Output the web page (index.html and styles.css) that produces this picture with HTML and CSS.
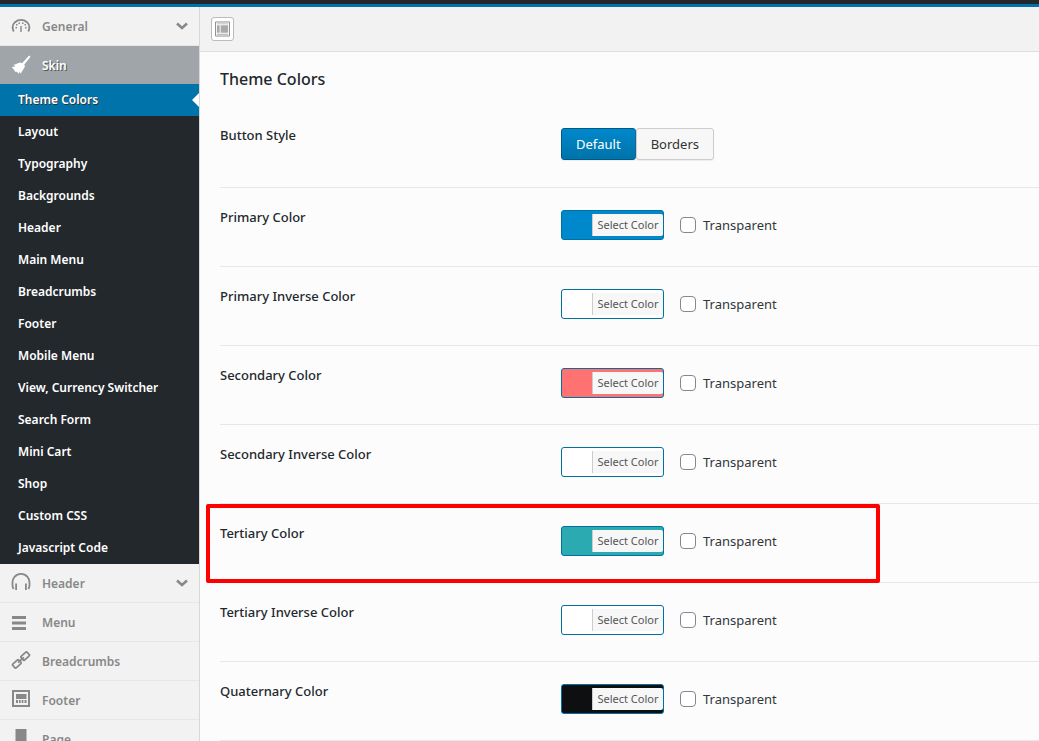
FILE: index.html
```html
<!DOCTYPE html>
<html lang="en">
<head>
    <meta charset="UTF-8">
    <meta name="viewport" content="width=device-width, initial-scale=1.0">
    <title>Theme Options - Theme Colors</title>
    <link rel="stylesheet" href="styles.css">
</head>
<body>
    <div class="topbar"></div>
    <div class="panel">
        <nav class="sidebar">
            <!-- General -->
            <a href="#" class="group">
                <svg class="icon" viewBox="0 0 20 20"><path d="M2.700 15.500C1 12 1.500 8.500 4 6.200 7.500 3.200 12.500 3.200 16 6.200 18.500 8.500 19 12 17.300 15.500" fill="none" stroke="currentColor" stroke-width="1.800"/><path d="M9.300 10h1.400v6H9.300zM5 8h1.500v1.500H5zM7.500 6.500H9V8H7.500zM11 6.500h1.500V8H11zM13.500 8H15v1.500h-1.500zM4.500 11H6v1.500H4.500zM14 11h1.500v1.500H14z" fill="currentColor"/></svg>
                <span>General</span>
                <svg class="chevron" viewBox="0 0 12 8"><path d="M1 1.500l5 4.500 5-4.500" fill="none" stroke="currentColor" stroke-width="2.500"/></svg>
            </a>

            <!-- Skin -->
            <a href="#" class="group open">
                <svg class="icon" viewBox="0 0 20 20"><path d="M18.200.5l1.300 1.300-6.300 8 .8 1.700L9.800 18.500 8 16.500l.2 2.500L5.500 16.500 5 17.500.8 12l3.700-.5L2.500 10 9 7.500l2 .7z" fill="currentColor"/></svg>
                <span>Skin</span>
            </a>
            <ul class="submenu">
                <li><a href="#" class="active">Theme Colors</a></li>
                <li><a href="#">Layout</a></li>
                <li><a href="#">Typography</a></li>
                <li><a href="#">Backgrounds</a></li>
                <li><a href="#">Header</a></li>
                <li><a href="#">Main Menu</a></li>
                <li><a href="#">Breadcrumbs</a></li>
                <li><a href="#">Footer</a></li>
                <li><a href="#">Mobile Menu</a></li>
                <li><a href="#">View, Currency Switcher</a></li>
                <li><a href="#">Search Form</a></li>
                <li><a href="#">Mini Cart</a></li>
                <li><a href="#">Shop</a></li>
                <li><a href="#">Custom CSS</a></li>
                <li><a href="#">Javascript Code</a></li>
            </ul>

            <a href="#" class="group">
                <svg class="icon" viewBox="0 0 20 20"><path d="M2.500 16C.5 12 1.500 6 3.500 3.800 7 0 13 0 16.500 3.800 18.500 6 19.500 12 17.500 16" fill="none" stroke="currentColor" stroke-width="1.800"/><path d="M4.200 10.500h1.800v6.500H4.200zM14 10.500h1.800v6.500H14z" fill="currentColor"/></svg>
                <span>Header</span>
                <svg class="chevron" viewBox="0 0 12 8"><path d="M1 1.500l5 4.500 5-4.500" fill="none" stroke="currentColor" stroke-width="2.500"/></svg>
            </a>
            <a href="#" class="group">
                <svg class="icon" viewBox="0 0 20 20"><path d="M1 4h14v3H1zM1 9.500h14v3H1zM1 15h14v3H1z" fill="currentColor"/></svg>
                <span>Menu</span>
            </a>
            <a href="#" class="group">
                <svg class="icon" viewBox="0 0 20 20"><g transform="rotate(-43 10 9)" fill="none" stroke="currentColor" stroke-width="1.700"><rect x=".3" y="6.500" width="8" height="5" rx=".8"/><rect x="11.700" y="6.500" width="8" height="5" rx=".8"/><path d="M6 9h8"/></g></svg>
                <span>Breadcrumbs</span>
            </a>
            <a href="#" class="group">
                <svg class="icon" viewBox="0 0 20 20"><path d="M2 1h16v15H2z" fill="none" stroke="currentColor" stroke-width="2"/><path d="M5 4h10.500v5H5zM5 10h2v3H5zM8 10h1.700v3H8zM10.700 10h1.700v3h-1.700zM13.500 10h2v3h-2z" fill="currentColor"/></svg>
                <span>Footer</span>
            </a>
            <a href="#" class="group">
                <svg class="icon" viewBox="0 0 20 20"><path d="M4.500 0h11v17h-11z" fill="currentColor"/></svg>
                <span>Page</span>
            </a>
        </nav>

        <main class="main">
            <div class="toolbar">
                <button type="button" class="expand" aria-label="Expand options">
                    <svg viewBox="0 0 16 16"><path d="M.5.5h15v15H.5z" fill="#fff" stroke="#888"/><path d="M2 2h12v1H2zM2 4h3v8H2zM6 4h8v8H6zM2 13h12v1H2z" fill="#aaa"/></svg>
                </button>
            </div>

            <form class="section">
                <h2>Theme Colors</h2>

                <div class="field">
                    <span class="field-title">Button Style</span>
                    <div class="button-set">
                        <button type="button" class="selected">Default</button>
                        <button type="button">Borders</button>
                    </div>
                </div>

                <div class="field">
                    <span class="field-title">Primary Color</span>
                    <div class="controls">
                        <button type="button" class="color-btn blue"><span>Select Color</span></button>
                        <label><input type="checkbox"> Transparent</label>
                    </div>
                </div>

                <div class="field">
                    <span class="field-title">Primary Inverse Color</span>
                    <div class="controls">
                        <button type="button" class="color-btn"><span>Select Color</span></button>
                        <label><input type="checkbox"> Transparent</label>
                    </div>
                </div>

                <div class="field">
                    <span class="field-title">Secondary Color</span>
                    <div class="controls">
                        <button type="button" class="color-btn coral"><span>Select Color</span></button>
                        <label><input type="checkbox"> Transparent</label>
                    </div>
                </div>

                <div class="field">
                    <span class="field-title">Secondary Inverse Color</span>
                    <div class="controls">
                        <button type="button" class="color-btn"><span>Select Color</span></button>
                        <label><input type="checkbox"> Transparent</label>
                    </div>
                </div>

                <div class="field highlight">
                    <span class="field-title">Tertiary Color</span>
                    <div class="controls">
                        <button type="button" class="color-btn teal"><span>Select Color</span></button>
                        <label><input type="checkbox"> Transparent</label>
                    </div>
                </div>

                <div class="field">
                    <span class="field-title">Tertiary Inverse Color</span>
                    <div class="controls">
                        <button type="button" class="color-btn"><span>Select Color</span></button>
                        <label><input type="checkbox"> Transparent</label>
                    </div>
                </div>

                <div class="field">
                    <span class="field-title">Quaternary Color</span>
                    <div class="controls">
                        <button type="button" class="color-btn black"><span>Select Color</span></button>
                        <label><input type="checkbox"> Transparent</label>
                    </div>
                </div>
            </form>
        </main>
    </div>
</body>
</html>
```
FILE: styles.css
```css
*,
*::after {
    margin: 0;
    padding: 0;
    box-sizing: border-box;
}

body {
    display: flex;
    flex-direction: column;
    height: 100vh;
    overflow: hidden;
    font-family: 'Segoe UI', 'Noto Sans', 'Open Sans', sans-serif;
    font-size: 13px;
    color: #23282d;
    background: #fcfcfc;
}

button {
    font-family: inherit;
    cursor: pointer;
}

.topbar {
    flex: none;
    height: 7px;
    background: #23282d;
    border-bottom: 3px solid #0073aa;
}

.panel {
    display: flex;
    flex: 1;
    min-height: 0;
}

/* Sidebar */
.sidebar {
    flex: none;
    width: 200px;
    background: #f2f2f2;
    border-right: 1px solid #d8d8d8;
    overflow: hidden;
}

.group {
    display: flex;
    align-items: center;
    height: 39px;
    padding: 0 11px;
    border-bottom: 1px solid #e7e7e7;
    color: #888;
    font-size: 12px;
    font-weight: 600;
    text-decoration: none;
}

.group .icon {
    width: 20px;
    height: 20px;
    margin-right: 11px;
}

.group .chevron {
    width: 12px;
    height: 8px;
    margin-left: auto;
}

.group.open {
    height: 38px;
    border-bottom: none;
    background: #a0a5aa;
    color: #fff;
    text-shadow: 1px 1px #555;
}

.submenu {
    list-style: none;
    background: #23282d;
}

.submenu a {
    display: block;
    padding: 0 18px;
    line-height: 32px;
    font-size: 12px;
    font-weight: 600;
    color: #fff;
    text-decoration: none;
}

.submenu .active {
    position: relative;
    background: #0073aa;
    text-shadow: 1px 1px #333;
}

.submenu .active::after {
    content: '';
    position: absolute;
    top: 9px;
    right: 0;
    border: 7px solid transparent;
    border-left: none;
    border-right-color: #fcfcfc;
}

/* Main column */
.main {
    flex: 1;
    min-width: 0;
}

.toolbar {
    display: flex;
    align-items: center;
    height: 45px;
    padding: 0 11px;
    background: #f2f2f2;
    border-bottom: 1px solid #dedede;
}

.expand {
    display: flex;
    align-items: center;
    justify-content: center;
    width: 23px;
    height: 24px;
    background: #fff;
    border: 1px solid #bbb;
    border-radius: 3px;
}

.expand svg {
    flex: none;
    width: 15px;
    height: 16px;
}

.section {
    padding: 14px 0 0 20px;
}

.section h2 {
    font-size: 16px;
    font-weight: 500;
    line-height: 26px;
    margin-bottom: 14px;
}

.field {
    position: relative;
    display: grid;
    grid-template-columns: 341px 1fr;
    align-items: start;
    padding: 22px 0 26px;
    border-bottom: 1px solid #e7e7e7;
}

.field-title {
    font-size: 13px;
    font-weight: 500;
    line-height: 14px;
}

.button-set {
    display: flex;
    padding-bottom: 1px;
}

.button-set button {
    height: 32px;
    padding: 0 14px;
    font-size: 13px;
    color: #333;
    background: #f7f7f7;
    border: 1px solid #ccc;
    border-radius: 3px;
    box-shadow: 0 1px 1px #eee;
}

.button-set .selected {
    color: #fff;
    background: linear-gradient(#0088cc, #0073aa);
    border-color: #005a87;
}

.controls {
    display: flex;
    align-items: center;
    gap: 16px;
}

.color-btn {
    width: 103px;
    height: 30px;
    padding: 3px 0 3px 30px;
    background: #fff;
    border: 1px solid #0071a1;
    border-radius: 3px;
}

.color-btn span {
    display: block;
    height: 22px;
    line-height: 22px;
    font-size: 11px;
    color: #555;
    background: #f7f7f7;
    border-left: 1px solid #ccc;
    border-radius: 0 2px 2px 0;
}

.color-btn.blue {
    background: #0088cc;
}

.color-btn.coral {
    background: #ff7272;
}

.color-btn.teal {
    background: #2baab1;
}

.color-btn.black {
    background: #0e0f11;
}

.controls label {
    display: flex;
    align-items: center;
    gap: 7px;
    font-size: 13px;
    color: #32373c;
}

.controls input {
    appearance: none;
    width: 16px;
    height: 16px;
    background: #fff;
    border: 1px solid #7e8993;
    border-radius: 4px;
}

.controls input:checked {
    background: #0073aa;
}

/* Red frame around the option */
.highlight::after {
    content: '';
    position: absolute;
    top: 0;
    left: -14px;
    width: 674px;
    height: 79px;
    border: 4px solid #ff0000;
    border-radius: 2px;
    pointer-events: none;
}
```
